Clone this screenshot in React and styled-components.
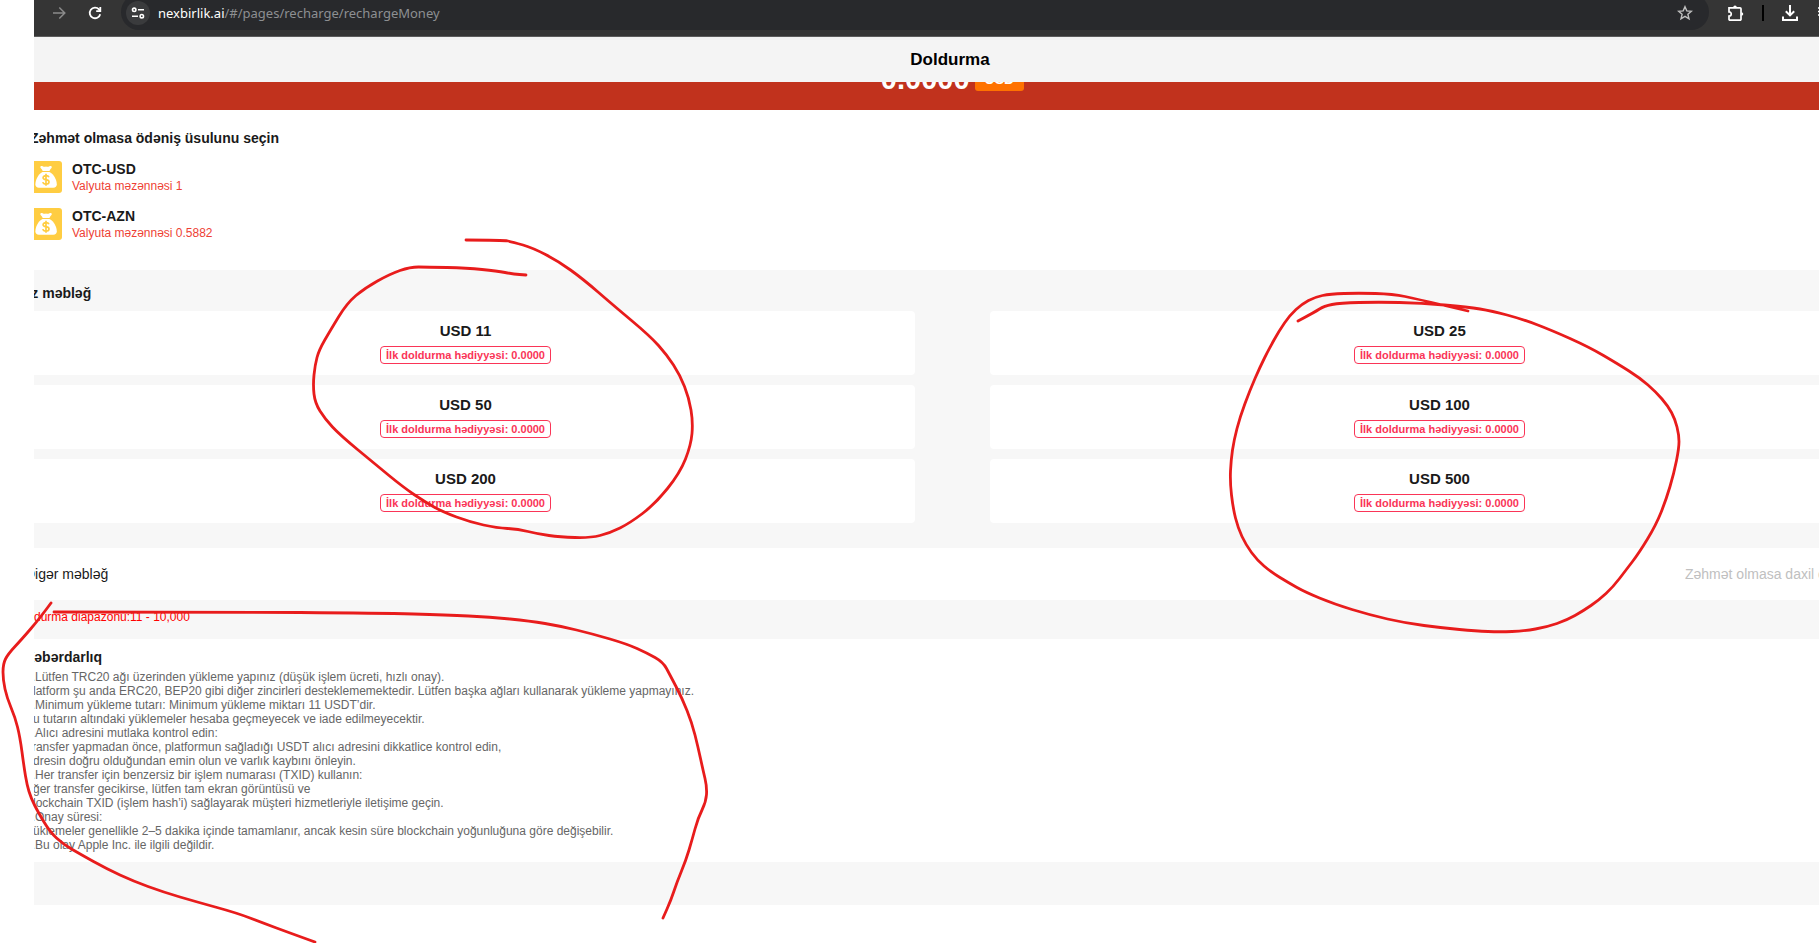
import React from 'react';
import styled, {createGlobalStyle} from 'styled-components';

const GlobalStyle = createGlobalStyle`
    body {
        margin: 0;
        background: #fff;
        color: #1a1a1a;
        font-family: "Liberation Sans", Arial, sans-serif;
        overflow: hidden;
    }

    * {
        box-sizing: border-box;
    }

    button {
        border: 0;
        padding: 0;
        background: none;
        color: inherit;
        font-family: inherit;
        cursor: pointer;
    }
`;

const StyledScreen = styled.div`
    position: relative;
    min-height: 100vh;
    padding-left: 34px;
    overflow: hidden;
`;

const StyledWindow = styled.div`
    overflow: hidden;
`;

/* browser bar */

const StyledToolbar = styled.div`
    display: flex;
    height: 37px;
    padding-left: 13px;
    background: #353535;
    border-bottom: 1px solid #5c5c5c;
    overflow: hidden;
`;

const StyledToolButton = styled.button`
    display: flex;
    flex: none;
    align-items: center;
    justify-content: center;
    width: ${props => props.$width || "20px"};
    height: 26px;
    color: ${props => props.$color || "#fff"};
`;

const StyledNavigation = styled.div`
    display: flex;
    gap: 12px;
    width: 74px;
`;

const StyledAddress = styled.div`
    display: flex;
    flex: 1;
    align-items: center;
    height: 36px;
    margin-top: -6px;
    padding: 2px 14px 0 5px;
    border-radius: 18px;
    background: #28292c;
    font-family: "Noto Sans", sans-serif;
    font-size: 13px;
    color: #8d8f92;
`;

const StyledSiteInfo = styled.button`
    display: flex;
    align-items: center;
    justify-content: center;
    width: 24px;
    height: 24px;
    margin-right: 8px;
    border-radius: 50%;
    background: #3a3b3d;
`;

const StyledHost = styled.span`
    color: #fff;
`;

const StyledUrl = styled.span`
    flex: 1;
`;

const StyledExtensions = styled.div`
    display: flex;
    flex: none;
    gap: 16px;
    width: 110px;
    padding-left: 17px;
`;

const StyledDivider = styled.span`
    flex: none;
    width: 2px;
    height: 16px;
    margin-top: 5px;
    background: #000;
`;

/* recharge page, wider than the visible part of the window */

const StyledPage = styled.main`
    margin: 0 -86px 0 -34px;
`;

const StyledHeader = styled.header`
    position: relative;
    z-index: 1;
    height: 45px;
    padding-right: 5px;
    background: #f4f4f4;
`;

const StyledPageTitle = styled.h1`
    margin: 0;
    font-size: 17px;
    line-height: 45px;
    text-align: center;
    color: #000;
`;

const StyledBalance = styled.section`
    display: flex;
    align-items: center;
    justify-content: center;
    gap: 5px;
    height: 62px;
    margin-top: -34px;
    background: #c1321d;
    color: #fff;
    font-weight: bold;
`;

const StyledAmount = styled.span`
    font-size: 29px;
    line-height: 32px;
`;

const StyledCurrency = styled.span`
    padding: 0 10px;
    border-radius: 3px;
    background: #ff7200;
    font-size: 14px;
    line-height: 24px;
`;

const StyledHeading = styled.h2`
    margin: 0;
    font-size: 14px;
    line-height: 16px;
`;

const StyledMethods = styled.section`
    display: flex;
    flex-direction: column;
    align-items: flex-start;
    gap: 15px;
    padding: 20px 30px 30px;
`;

const StyledMethod = styled.button`
    display: flex;
    gap: 10px;
    height: 32px;
    text-align: left;
`;

const StyledMethodName = styled.span`
    display: block;
    font-size: 14px;
    font-weight: bold;
    line-height: 16px;
`;

const StyledRate = styled.span`
    display: block;
    font-size: 12px;
    line-height: 18px;
    color: #ee3f35;
`;

const StyledAmounts = styled.section`
    padding: 15px 16px 25px;
    background: #f7f7f7;
`;

const StyledAmountGrid = styled.div`
    display: grid;
    grid-template-columns: 48% 48%;
    justify-content: space-between;
    row-gap: 10px;
    margin-top: 10px;
`;

const StyledAmountCard = styled.button`
    display: flex;
    flex-direction: column;
    align-items: center;
    gap: 6px;
    padding: 11px 0;
    border-radius: 4px;
    background: #fff;
    font-size: 15px;
    font-weight: bold;
    line-height: 18px;
`;

const StyledBonus = styled.span`
    padding: 0 5px;
    border: 1px solid #fa3557;
    border-radius: 4px;
    color: #fa3557;
    font-size: 11px;
    line-height: 16px;
`;

const StyledOther = styled.section`
    display: flex;
    align-items: center;
    justify-content: space-between;
    height: 52px;
    padding: 0 25px;
    font-size: 14px;
`;

const StyledAmountInput = styled.input`
    width: 195px;
    padding: 0;
    border: 0;
    background: none;
    font-family: inherit;
    font-size: 14px;

    &::placeholder {
        color: #c0c0c0;
    }
`;

const StyledRange = styled.p`
    margin: 0;
    padding: 10px 16px 15px;
    background: #f7f7f7;
    color: #f00;
    font-size: 12px;
    line-height: 14px;
`;

const StyledWarning = styled.section`
    padding: 10px 25px;
`;

const StyledWarningText = styled.div`
    margin-top: 5px;
    color: #666;
    font-size: 12px;
    line-height: 14px;
`;

const StyledFooter = styled.footer`
    height: 43px;
    background: #f7f7f7;
`;

const StyledMarks = styled.svg`
    position: absolute;
    top: 0;
    left: 0;
    z-index: 2;
    pointer-events: none;
`;

const METHODS = [
    {name: "OTC-USD", rate: "1"},
    {name: "OTC-AZN", rate: "0.5882"},
];

const AMOUNTS = [11, 25, 50, 100, 200, 500];

const WARNINGS = [
    "1.Lütfen TRC20 ağı üzerinden yükleme yapınız (düşük işlem ücreti, hızlı onay).",
    "Platform şu anda ERC20, BEP20 gibi diğer zincirleri desteklememektedir. Lütfen başka ağları kullanarak yükleme yapmayınız.",
    "2.Minimum yükleme tutarı: Minimum yükleme miktarı 11 USDT’dir.",
    "Bu tutarın altındaki yüklemeler hesaba geçmeyecek ve iade edilmeyecektir.",
    "3.Alıcı adresini mutlaka kontrol edin:",
    "Transfer yapmadan önce, platformun sağladığı USDT alıcı adresini dikkatlice kontrol edin,",
    "Adresin doğru olduğundan emin olun ve varlık kaybını önleyin.",
    "4.Her transfer için benzersiz bir işlem numarası (TXID) kullanın:",
    "Eğer transfer gecikirse, lütfen tam ekran görüntüsü ve",
    "Blockchain TXID (işlem hash’i) sağlayarak müşteri hizmetleriyle iletişime geçin.",
    "5.Onay süresi:",
    "Yüklemeler genellikle 2–5 dakika içinde tamamlanır, ancak kesin süre blockchain yoğunluğuna göre değişebilir.",
    "6.Bu olay Apple Inc. ile ilgili değildir.",
];

// pen strokes, as x,y points
const STROKES = [
    [[466, 240], [503, 240], [513, 242], [533, 248], [558, 261], [583, 279], [613, 305], [650, 336], [667, 355],
        [680, 375], [689, 398], [693, 422], [691, 445], [680, 473], [655, 504], [630, 523], [610, 533], [590, 538],
        [560, 537], [538, 534], [518, 529], [497, 528], [470, 522], [443, 512], [425, 502], [403, 487], [375, 464],
        [340, 435], [325, 419], [315, 403], [313, 385], [315, 365], [319, 350], [330, 331], [347, 303], [365, 288],
        [390, 274], [410, 267], [427, 267], [467, 268], [497, 271], [513, 274], [526, 275]],
    [[1298, 321], [1315, 312], [1324, 306], [1340, 303], [1378, 302], [1421, 303], [1468, 307], [1492, 311],
        [1522, 319], [1551, 330], [1589, 347], [1618, 364], [1640, 378], [1656, 392], [1668, 406], [1675, 419],
        [1679, 435], [1679, 448], [1674, 473], [1666, 500], [1656, 525], [1639, 553], [1626, 570], [1613, 587],
        [1599, 600], [1583, 611], [1567, 620], [1547, 627], [1524, 631], [1500, 632], [1476, 631], [1443, 628],
        [1405, 623], [1370, 615], [1334, 604], [1305, 592], [1289, 583], [1271, 572], [1257, 560], [1246, 545],
        [1238, 528], [1233, 508], [1230, 482], [1231, 460], [1234, 440], [1240, 417], [1250, 390], [1260, 367],
        [1269, 349], [1279, 331], [1290, 315], [1302, 304], [1315, 297], [1330, 294], [1358, 293], [1393, 294],
        [1417, 299], [1468, 311]],
    [[51, 603], [40, 618], [22, 639], [8, 654], [3, 664], [3, 680], [7, 698], [15, 717], [20, 737], [24, 767],
        [27, 785], [31, 798], [38, 812], [50, 832], [63, 844], [80, 854], [107, 869], [133, 881], [163, 892],
        [197, 902], [237, 913], [263, 923], [290, 933], [315, 942]],
    [[54, 612], [220, 612], [380, 613], [447, 615], [490, 617], [530, 621], [560, 626], [593, 634], [627, 644],
        [647, 653], [663, 662], [670, 675], [682, 698], [692, 723], [698, 747], [703, 770], [707, 787], [706, 802],
        [698, 818], [692, 840], [686, 860], [677, 882], [671, 900], [663, 918]],
];

// curve from midpoint to midpoint, each point bends it
function smoothPath(points) {
    let d = `M${points[0]}`;

    for (let i = 1; i < points.length - 1; i++) {
        const point = points[i];
        const next = points[i + 1];

        d += ` Q${point} ${(point[0] + next[0]) / 2},${(point[1] + next[1]) / 2}`;
    }

    return `${d} L${points[points.length - 1]}`;
}

function MoneyBag() {
    return (
        <svg width="32" height="32" viewBox="0 0 32 32" aria-hidden="true">
            <rect width="32" height="32" rx="3" fill="#ffcd42" />
            <path
                d="M10.300 6.200c0-1.300 1.400-1.500 2.700-.8 1.100.6 1.900.6 3 .1 1.100.5 2 .5 3.100-.1 1.300-.7 2.700-.5 2.700.8 0 1.300-1.800 1.700-2.300 3.800h-6.800c-.5-2.100-2.400-2.500-2.400-3.800z"
                fill="#fff"
            />
            <path
                d="M12.500 11h7c4.500 2.500 7.300 8 7.300 12.300 0 2.300-1.300 3.500-3.500 3.500H8.900c-2.200 0-3.500-1.200-3.500-3.500C5.400 19 8 13.500 12.500 11z"
                fill="#fff"
            />
            <path
                d="M19 16.300c-.4-1-1.500-1.600-3-1.600-1.700 0-2.900.8-2.900 2 0 1.300 1.200 1.700 2.900 2s3 .8 3 2.200c0 1.300-1.300 2.100-3 2.100s-2.900-.7-3.200-1.900M16 12.800v12"
                fill="none"
                stroke="#ffcd42"
                strokeWidth="1.700"
            />
        </svg>
    );
}

function BrowserBar() {
    return (
        <StyledToolbar>
            <StyledNavigation>
                <StyledToolButton $width="24px" $color="#8b8b8b" aria-label="Forward">
                    <svg width="14" height="14" viewBox="0 0 14 14" fill="none" stroke="currentColor" strokeWidth="1.5">
                        <path d="M1 7h11.500M7.300 1.500L12.800 7l-5.500 5.500" />
                    </svg>
                </StyledToolButton>
                <StyledToolButton $width="24px" aria-label="Reload">
                    <svg width="14" height="14" viewBox="0 0 14 14" fill="none" stroke="currentColor" strokeWidth="1.800">
                        <path d="M12.200 8.200A5.300 5.300 0 1 1 11 3.400l1.300 1.400" />
                        <path d="M12.300 1v4.200H8.200" />
                    </svg>
                </StyledToolButton>
            </StyledNavigation>
            <StyledAddress>
                <StyledSiteInfo aria-label="Site information">
                    <svg width="14" height="12" viewBox="0 0 14 12" fill="none" stroke="#fff" strokeWidth="1.600">
                        <circle cx="3.200" cy="2.800" r="1.700" />
                        <path d="M7 2.800h6M1 9.200h6" />
                        <circle cx="10.800" cy="9.200" r="1.700" />
                    </svg>
                </StyledSiteInfo>
                <StyledUrl><StyledHost>nexbirlik.ai</StyledHost>/#/pages/recharge/rechargeMoney</StyledUrl>
                <StyledToolButton $color="#c0c0c0" aria-label="Bookmark">
                    <svg width="16" height="16" viewBox="0 0 16 16" fill="none" stroke="currentColor" strokeWidth="1.400">
                        <path d="M8 1.700l1.800 4.200 4.600.4-3.500 3 1.100 4.500L8 11.400l-4 2.400 1.100-4.500-3.500-3 4.600-.4z" />
                    </svg>
                </StyledToolButton>
            </StyledAddress>
            <StyledExtensions>
                <StyledToolButton aria-label="Extensions">
                    <svg width="18" height="18" viewBox="0 0 18 18" fill="none" stroke="currentColor" strokeWidth="1.700">
                        <path d="M2 3.800h11a1 1 0 0 1 1 1v10.400a1 1 0 0 1-1 1H3a1 1 0 0 1-1-1v-3c3 0 3-4.400 0-4.400z" />
                        <path d="M6.200 3.500a1.800 2 0 0 1 3.600 0zM14.300 8.200a2 1.800 0 0 1 0 3.600z" fill="currentColor" stroke="none" />
                    </svg>
                </StyledToolButton>
                <StyledDivider />
                <StyledToolButton aria-label="Downloads">
                    <svg width="18" height="18" viewBox="0 0 18 18" fill="none" stroke="currentColor" strokeWidth="2">
                        <path d="M9 1v10M4.800 7.200L9 11.400l4.200-4.200M2 12.500V16h14v-3.500" />
                    </svg>
                </StyledToolButton>
                <StyledToolButton aria-label="Media">
                    <svg width="16" height="16" viewBox="0 0 16 16" fill="none" stroke="currentColor" strokeWidth="1.600">
                        <path d="M0 3h10M0 6.500h10M0 10h6" />
                    </svg>
                </StyledToolButton>
            </StyledExtensions>
        </StyledToolbar>
    );
}

export default function App() {
    return (
        <StyledScreen>
            <GlobalStyle />
            <StyledWindow>
                <BrowserBar />
                <StyledPage>
                    <StyledHeader>
                        <StyledPageTitle>Doldurma</StyledPageTitle>
                    </StyledHeader>
                    <StyledBalance>
                        <StyledAmount>0.0000</StyledAmount>
                        <StyledCurrency>USD</StyledCurrency>
                    </StyledBalance>
                    <StyledMethods>
                        <StyledHeading>Zəhmət olmasa ödəniş üsulunu seçin</StyledHeading>
                        {METHODS.map(method => (
                            <StyledMethod key={method.name}>
                                <MoneyBag />
                                <span>
                                    <StyledMethodName>{method.name}</StyledMethodName>
                                    <StyledRate>Valyuta məzənnəsi {method.rate}</StyledRate>
                                </span>
                            </StyledMethod>
                        ))}
                    </StyledMethods>
                    <StyledAmounts>
                        <StyledHeading>Tez məbləğ</StyledHeading>
                        <StyledAmountGrid>
                            {AMOUNTS.map(amount => (
                                <StyledAmountCard key={amount}>
                                    <span>USD {amount}</span>
                                    <StyledBonus>İlk doldurma hədiyyəsi: 0.0000</StyledBonus>
                                </StyledAmountCard>
                            ))}
                        </StyledAmountGrid>
                    </StyledAmounts>
                    <StyledOther>
                        <label htmlFor="amount">Digər məbləğ</label>
                        <StyledAmountInput id="amount" type="text" placeholder="Zəhmət olmasa daxil edin" />
                    </StyledOther>
                    <StyledRange>Doldurma diapazonu:11 - 10,000</StyledRange>
                    <StyledWarning>
                        <StyledHeading>Xəbərdarlıq</StyledHeading>
                        <StyledWarningText>
                            {WARNINGS.map(line => <div key={line}>{line}</div>)}
                        </StyledWarningText>
                    </StyledWarning>
                    <StyledFooter />
                </StyledPage>
            </StyledWindow>
            <StyledMarks width="1819" height="943" viewBox="0 0 1819 943" aria-hidden="true">
                {STROKES.map((points, index) => (
                    <path
                        key={index}
                        d={smoothPath(points)}
                        fill="none"
                        stroke="#e81c1c"
                        strokeWidth="2.800"
                        strokeLinecap="round"
                        />
                ))}
            </StyledMarks>
        </StyledScreen>
    );
}
